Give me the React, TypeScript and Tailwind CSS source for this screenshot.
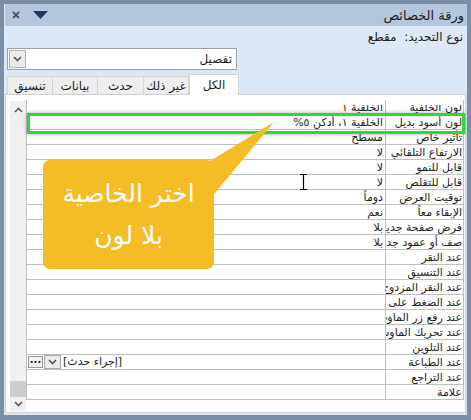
import React from 'react';

const rows: [string, string][] = [
  ['لون الخلفية', 'الخلفية ١'],
  ['لون أسود بديل', 'الخلفية ١، أدكن ٥%'],
  ['تأثير خاص', 'مسطح'],
  ['الارتفاع التلقائي', 'لا'],
  ['قابل للنمو', 'لا'],
  ['قابل للتقلص', 'لا'],
  ['توقيت العرض', 'دوماً'],
  ['الإبقاء معاً', 'نعم'],
  ['فرض صفحة جديدة', 'بلا'],
  ['صف أو عمود جديد', 'بلا'],
  ['عند النقر', ''],
  ['عند التنسيق', ''],
  ['عند النقر المزدوج', ''],
  ['عند الضغط على مفتاح', ''],
  ['عند رفع زر الماوس', ''],
  ['عند تحريك الماوس', ''],
  ['عند التلوين', ''],
  ['عند الطباعة', ''],
  ['عند التراجع', ''],
  ['علامة', ''],
];

const tabs = ['تنسيق', 'بيانات', 'حدث', 'غير ذلك'];

const Chevron: React.FC<{ up?: boolean; className?: string }> = ({ up, className }) => (
  <svg width="9" height="6" viewBox="0 0 9 6" className={className}>
    <path
      d={up ? 'M1 5 L4.5 1.5 L8 5' : 'M1 1 L4.5 4.5 L8 1'}
      fill="none"
      stroke="currentColor"
      strokeWidth="1.6"
    />
  </svg>
);

const App: React.FC = () => {
  return (
    <div className="w-[471px] h-[420px] bg-[#7b8ea6] pt-[4px] pl-[4px] pr-[4px] pb-[5px] font-['DejaVu_Sans',sans-serif] text-[#1e1e1e]">
      <div className="w-full h-full bg-[#dde8f7] flex flex-col">
        {/* title bar */}
        <div className="h-[22px] bg-[#b4c5dc] ml-[1px] flex items-center justify-between pl-[7px] pr-[3px]">
          <div className="flex items-center gap-[13px]">
            <svg width="8" height="8" viewBox="0 0 8 8">
              <path d="M1 1 L7 7 M7 1 L1 7" stroke="#555" strokeWidth="1.8" />
            </svg>
            <svg width="15" height="8" viewBox="0 0 15 8">
              <path d="M0 0 H15 L7.5 8 Z" fill="#1f3a5f" />
            </svg>
          </div>
          <span dir="rtl" className="text-[13px] leading-none">ورقة الخصائص</span>
        </div>

        {/* selection type */}
        <div className="h-[22px] flex justify-end items-start pt-[3px] pr-[4px]">
          <span dir="rtl" className="text-[12px] leading-[16px] whitespace-pre">نوع التحديد:  مقطع</span>
        </div>

        {/* dropdown */}
        <div className="h-[22px] ml-[3px] w-[230px] bg-white border border-[#a0a0a0] flex items-center">
          <div className="ml-[1px] w-[17px] h-[18px] bg-[#ececec] border border-[#b0b0b0] flex items-center justify-center text-[#555]">
            <Chevron />
          </div>
          <span dir="rtl" className="flex-1 text-right pr-[4px] text-[12px]">تفصيل</span>
        </div>

        {/* tabs */}
        <div className="h-[20px] mt-[4px] ml-[3px] flex items-start relative z-10">
          {tabs.map((t, i) => (
            <div
              key={t}
              className={`mt-[2px] h-[18px] border border-[#d4d4d4] border-b-0 bg-[#eeeeee] flex items-center justify-center text-[12px] ${
                i === 0 ? 'w-[46px]' : i === 1 ? 'w-[45px] border-l-0' : i === 2 ? 'w-[46px] border-l-0' : 'w-[45px] border-l-0'
              }`}
            >
              <span dir="rtl">{t}</span>
            </div>
          ))}
          <div className="h-[21px] w-[50px] bg-white border border-[#d4d4d4] border-b-0 flex items-center justify-center text-[12px]">
            <span dir="rtl">الكل</span>
          </div>
        </div>

        {/* panel */}
        <div className="h-[319px] mx-[1px] bg-white border border-[#d0d0d0] pl-[4px] pt-[6px] flex items-start">
          {/* scrollbar */}
          <div className="w-[16px] h-[310px] bg-[#f0f0f0] flex flex-col items-center text-[#5a5a5a]">
            <Chevron up className="mt-[6px]" />
            <div className="flex-1" />
            <div className="w-[16px] h-[16px] bg-[#cdcdcd] mb-[4px]" />
            <Chevron className="mb-[4px]" />
          </div>

          {/* grid */}
          <div className="relative -mt-[1px] w-[438px] border-l border-r border-[#bfbfbf]" dir="rtl">
            {rows.map(([name, value], i) => (
              <div key={name} className="h-[15px] flex border-b border-[#bfbfbf] text-[11px] leading-[14px]">
                <div className="w-[78px] shrink-0 border-l border-[#bfbfbf] overflow-hidden whitespace-nowrap pr-[1px]">
                  <div className={i === 0 ? 'pt-[1px] [clip-path:inset(5px_0_0_0)]' : 'pt-[1px]'}>{name}</div>
                </div>
                <div className="flex-1 overflow-hidden whitespace-nowrap pr-[2px] flex">
                  <div className={i === 0 ? 'pt-[1px] [clip-path:inset(5px_0_0_0)]' : 'pt-[1px]'}>{value}</div>
                  {i === 17 && (
                    <div className="flex-1 flex items-center justify-end gap-[1px] pl-[1px]" dir="ltr">
                      <div className="w-[15px] h-[12px] border border-[#9a9a9a] bg-[#f2f2f2] flex items-center justify-center text-[10px] leading-none font-bold pb-[4px]">
                        ...
                      </div>
                      <div className="w-[17px] h-[14px] border border-[#a8a8a8] bg-[#ececec] flex items-center justify-center text-[#555]">
                        <Chevron />
                      </div>
                      <span dir="rtl" className="ml-[1px] text-[11px]">[إجراء حدث]</span>
                      <div className="flex-1" />
                    </div>
                  )}
                </div>
              </div>
            ))}

            {/* highlight frame */}
            <div className="absolute left-0 -right-[2px] top-[13px] h-[21px] border-[3px] border-[#2fd831] shadow-[0_0_4px_rgba(0,0,0,0.35)]" />

            {/* callout tail */}
            <svg className="absolute left-[183px] top-[21px]" width="66" height="80" viewBox="0 0 66 80">
              <polygon points="0,40 64,1 0,78" fill="#f4bd25" />
            </svg>

            {/* callout */}
            <div className="absolute left-[16px] top-[60px] w-[171px] h-[109px] rounded-[7px] bg-[#f4bd25] text-white flex flex-col items-center justify-center text-[25px] leading-[42px]">
              <span>اختر الخاصية</span>
              <span>بلا لون</span>
            </div>

            {/* text cursor */}
            <svg className="absolute left-[272px] top-[74px]" width="9" height="16" viewBox="0 0 9 16">
              <path d="M1 0.5 H8 M4.5 0.5 V15.5 M1 15.5 H8" stroke="#000" strokeWidth="1.2" fill="none" />
            </svg>
          </div>
        </div>
      </div>
    </div>
  );
};

export default App;
